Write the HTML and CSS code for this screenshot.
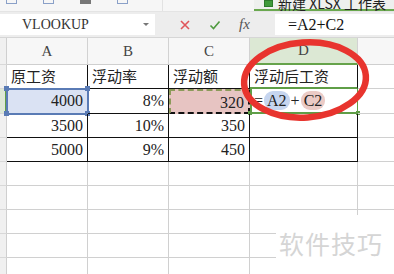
FILE: index.html
```html
<!DOCTYPE html>
<html lang="zh-CN">
<head>
  <meta charset="UTF-8">
  <title>WPS 表格 - 浮动后工资</title>
  <link rel="stylesheet" href="styles.css">
</head>
<body>
  <!-- top toolbar strip, mostly scrolled off -->
  <div class="toolbar">
    <div class="tool-icons">
      <span class="ti"></span><span class="ti"></span><span class="ti dark"></span><span class="ti"></span>
    </div>
    <div class="tab">
      <span class="tab-icon"></span>
      <span class="tab-text">新建 XLSX 工作表</span>
    </div>
  </div>

  <!-- formula bar -->
  <div class="formula-bar">
    <div class="name-box">
      <span>VLOOKUP</span>
      <span class="caret"></span>
    </div>
    <div class="fb-buttons">
      <svg class="fb-icon" width="12" height="12" viewBox="0 0 12 12"><path d="M2 2 L10 10 M10 2 L2 10" stroke="#e0565b" stroke-width="1.6"/></svg>
      <svg class="fb-icon" width="12" height="12" viewBox="0 0 12 12"><path d="M1.5 6.5 L4.5 9.5 L10.5 2.5" stroke="#4f9a3f" stroke-width="1.6" fill="none"/></svg>
      <span class="fx">fx</span>
    </div>
    <div class="formula-input">=A2+C2</div>
  </div>

  <!-- sheet grid -->
  <div class="sheet">
    <div class="corner"></div>
    <div class="col-head">A</div>
    <div class="col-head">B</div>
    <div class="col-head">C</div>
    <div class="col-head active">D</div>
    <div class="col-head last"></div>

    <div class="row-head"></div>
    <div class="cell t">原工资</div>
    <div class="cell t">浮动率</div>
    <div class="cell t">浮动额</div>
    <div class="cell t d1">浮动后工资</div>
    <div class="cell e"></div>

    <div class="row-head active"></div>
    <div class="cell t n sel-a">4000<i class="h tl"></i><i class="h tr"></i><i class="h bl"></i><i class="h br"></i></div>
    <div class="cell t n">8%</div>
    <div class="cell t n sel-c">320</div>
    <div class="cell t edit"><span>=</span><span class="ref ref-a">A2</span><span>+</span><span class="ref ref-c">C2</span><i class="g gbl"></i><i class="g gbr"></i></div>
    <div class="cell e"></div>

    <div class="row-head"></div>
    <div class="cell t n">3500</div>
    <div class="cell t n">10%</div>
    <div class="cell t n">350</div>
    <div class="cell t"></div>
    <div class="cell e"></div>

    <div class="row-head"></div>
    <div class="cell t n">5000</div>
    <div class="cell t n">9%</div>
    <div class="cell t n">450</div>
    <div class="cell t"></div>
    <div class="cell e"></div>

    <div class="row-head"></div><div class="cell"></div><div class="cell"></div><div class="cell"></div><div class="cell"></div><div class="cell e"></div>
    <div class="row-head"></div><div class="cell"></div><div class="cell"></div><div class="cell"></div><div class="cell"></div><div class="cell e"></div>
    <div class="row-head"></div><div class="cell"></div><div class="cell"></div><div class="cell"></div><div class="cell"></div><div class="cell e"></div>
    <div class="row-head"></div><div class="cell"></div><div class="cell"></div><div class="cell"></div><div class="cell"></div><div class="cell e"></div>
    <div class="row-head"></div><div class="cell"></div><div class="cell"></div><div class="cell"></div><div class="cell"></div><div class="cell e"></div>
  </div>

  <!-- red hand-drawn circle around D column -->
  <svg class="circle" width="140" height="90" viewBox="0 0 140 90">
    <ellipse cx="68" cy="43" rx="61" ry="37.5" fill="none" stroke="#e8342e" stroke-width="6.5" transform="rotate(-4 68 43)"/>
  </svg>

  <!-- watermark -->
  <div class="watermark">软件技巧</div>
</body>
</html>
```

FILE: styles.css
```css
body {
  margin: 0;
  width: 394px;
  height: 274px;
  overflow: hidden;
  background: #fff;
  position: relative;
  font-family: "Liberation Serif", "Noto Sans CJK SC", serif;
  color: #222;
}

/* toolbar */
.toolbar {
  height: 11px;
  background: #f6f6f6;
  display: flex;
  overflow: hidden;
  border-bottom: 1px solid #e4e4e4;
}
.tool-icons {
  width: 156px;
  display: flex;
  gap: 26px;
  padding-left: 6px;
  border-right: 1px solid #e2e2e2;
}
.ti {
  width: 9px;
  height: 3px;
  border: 1px solid #8aa0c8;
  border-top: none;
}
.ti.dark {
  background: #777;
  border-color: #777;
}
.tab {
  margin-left: auto;
  width: 140px;
  background: #eef0ee;
  border-bottom: 2px solid #6aa84f;
  display: flex;
  align-items: flex-end;
  gap: 5px;
  padding: 0 0 3px 10px;
  box-sizing: border-box;
}
.tab-icon {
  width: 7px;
  height: 5px;
  background: #3f9a3a;
  border: 1px solid #2d7a2b;
  margin-bottom: -1px;
}
.tab-text {
  font-family: "Noto Sans CJK SC", sans-serif;
  font-size: 14px;
  line-height: 6px;
  white-space: nowrap;
  color: #222;
}

/* formula bar */
.formula-bar {
  height: 25px;
  display: flex;
  background: #ededed;
  border-bottom: 1px solid #d6d6d6;
}
.name-box {
  width: 155px;
  background: #fff;
  margin: 2px 0;
  display: flex;
  align-items: center;
  padding-left: 22px;
  box-sizing: border-box;
  font-size: 14px;
  color: #333;
}
.caret {
  margin-left: auto;
  margin-right: 6px;
  border-left: 3px solid transparent;
  border-right: 3px solid transparent;
  border-top: 3px solid #777;
}
.fb-buttons {
  width: 120px;
  display: flex;
  align-items: center;
  gap: 18px;
  padding-left: 24px;
  box-sizing: border-box;
}
.fx {
  font-style: italic;
  font-size: 15px;
  color: #555;
}
.formula-input {
  flex: 1;
  background: #fff;
  margin: 2px 0;
  padding-left: 13px;
  font-size: 16px;
  line-height: 21px;
  color: #111;
}

/* sheet */
.sheet {
  display: grid;
  grid-template-columns: 7px 81px 81px 81px 108px 1fr;
  grid-template-rows: 27px 24px 25px 24px 24px 24px 24px 24px 24px 24px;
}
.corner,
.row-head {
  background: #f0f0f0;
  border-right: 1px solid #cfcfcf;
  border-bottom: 1px solid #d8d8d8;
  box-sizing: border-box;
}
.row-head.active {
  border-right: 2px solid #5f9e47;
  background: #dde8d6;
}
.col-head {
  background: #f7f7f7;
  border-right: 1px solid #d2d2d2;
  border-bottom: 1px solid #cfcfcf;
  box-sizing: border-box;
  text-align: center;
  font-size: 15px;
  line-height: 26px;
  color: #444;
}
.col-head.active {
  background: #dce8d4;
  border-bottom: 2px solid #66a34b;
  line-height: 25px;
}
.col-head.last {
  border-right: none;
}
.cell {
  border-right: 1px solid #d0d0d0;
  border-bottom: 1px solid #d0d0d0;
  box-sizing: border-box;
  position: relative;
  font-size: 15px;
  line-height: 24px;
  padding: 0 4px;
  white-space: nowrap;
}
.cell.e {
  border-right: none;
}
.cell.t {
  border-right-color: #111;
  border-bottom-color: #111;
  font-family: "Noto Sans CJK SC", sans-serif;
  font-size: 15px;
  line-height: 22px;
}
.cell.n {
  font-family: "Liberation Serif", serif;
  text-align: right;
  font-size: 16px;
  line-height: 24px;
}
.cell.d1 {
  border-bottom: 2px solid #5f9e47;
}

/* selections */
.sel-a {
  background: #dae2f3;
  outline: 2px solid #5a7bb5;
  outline-offset: -1px;
}
.h {
  position: absolute;
  width: 5px;
  height: 5px;
  background: #5a7bb5;
}
.tl { left: -3px; top: -3px; }
.tr { right: -3px; top: -3px; }
.bl { left: -3px; bottom: -3px; }
.br { right: -3px; bottom: -3px; }
.sel-c {
  background: #e7c4c2;
  border: 2px dashed #8c9a5a;
  border-right: 2px dashed #8c9a5a;
  border-bottom: 2px dashed #8c9a5a;
  line-height: 20px;
}
.edit {
  border: none;
  border-bottom: 2px solid #5f9e47 !important;
  border-right: 1px solid #5f9e47 !important;
  box-shadow: inset 2px 0 0 #5f9e47;
  font-family: "Liberation Serif", serif !important;
  font-size: 16px !important;
  line-height: 22px !important;
  padding-left: 4px;
  display: flex;
  align-items: center;
  gap: 1px;
}
.ref {
  border-radius: 9px;
  padding: 0 3px;
  line-height: 19px;
}
.ref-a { background: #c6d5ef; }
.ref-c { background: #ebcbc6; }
.g {
  position: absolute;
  width: 4px;
  height: 4px;
  background: #5f9e47;
}
.gbl { left: -2px; bottom: -3px; }
.gbr { right: -3px; bottom: -3px; }

/* overlays */
.circle {
  position: absolute;
  left: 237px;
  top: 37px;
}
.watermark {
  position: absolute;
  left: 276px;
  top: 215px;
  width: 118px;
  height: 59px;
  background: #fff;
  font-family: "Noto Sans CJK SC", sans-serif;
  font-size: 25px;
  color: #d5d5d5;
  padding: 10px 0 0 3px;
  box-sizing: border-box;
  letter-spacing: 1px;
}
```
